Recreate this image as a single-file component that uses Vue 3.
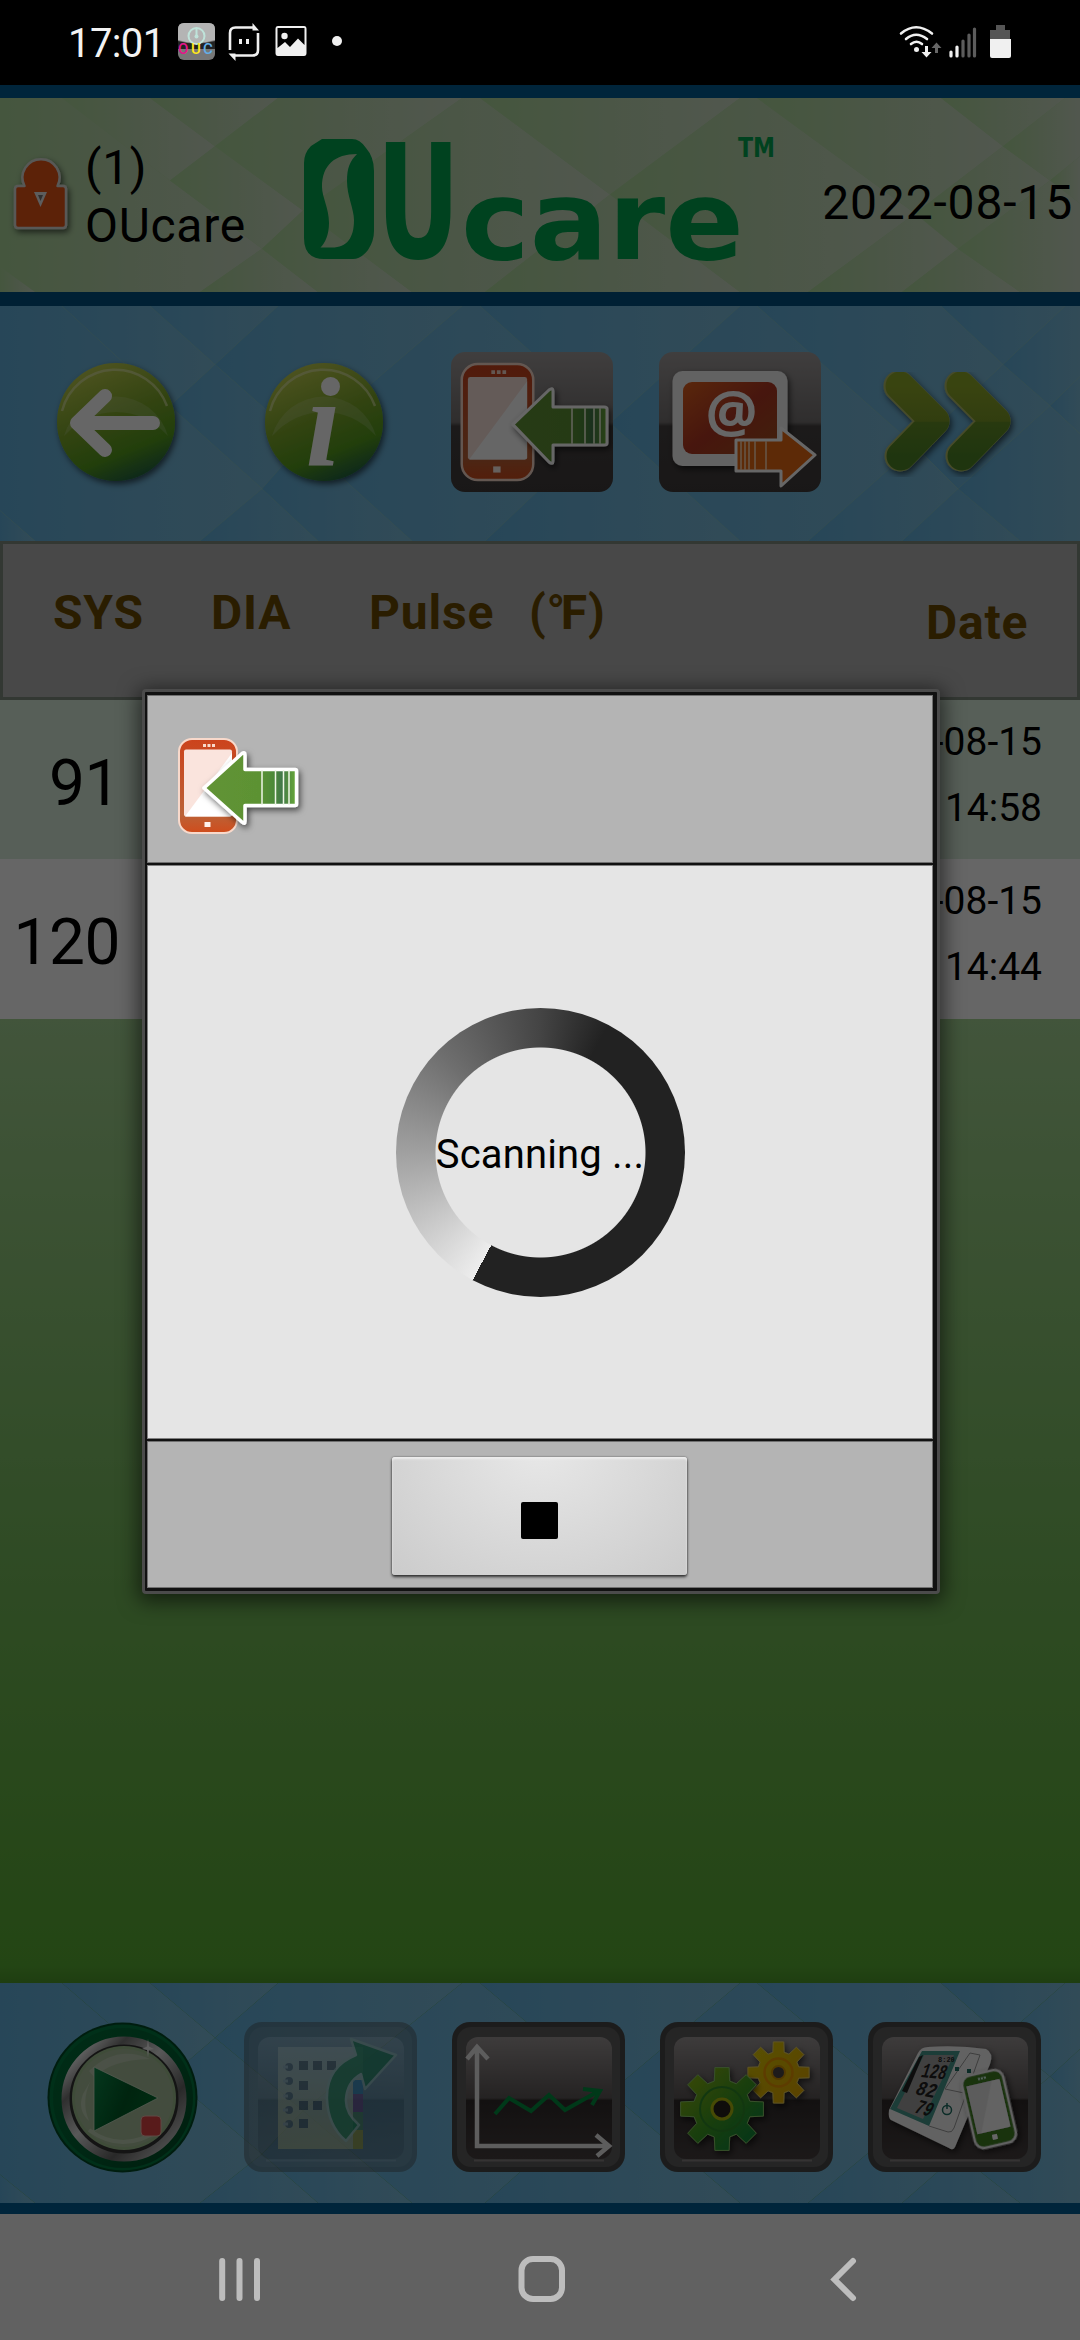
<script setup>
const shards = [
  '0,0 62,0 170,82 262,150 200,193 35,193 0,168',
  '62,0 150,0 215,48 170,82',
  '150,0 278,0 215,48',
  '170,82 215,48 303,112 262,150',
  '278,0 462,0 303,112 215,48',
  '200,193 262,150 318,193',
  '262,150 303,112 412,193 318,193',
  '462,0 480,0 610,96 485,193 412,193 303,112',
  '480,0 740,0 610,96',
  '485,193 610,96 740,193',
  '740,0 757,0 915,115 808,193 740,193 610,96',
  '757,0 941,0 1003,48 915,115',
  '941,0 1065,0 1003,48',
  '1003,48 1050,82 958,150 915,115',
  '1065,0 1080,0 1080,58 1050,82 1003,48',
  '1050,82 1080,58 1080,105',
  '808,193 915,115 958,150 902,193',
  '902,193 958,150 1020,193',
  '1050,82 1080,105 1080,193 1020,193 958,150',
  '0,168 35,193 0,193',
]

const records = [
  { sys: '91', date: '2022-08-15', time: '14:58' },
  { sys: '120', date: '2022-08-15', time: '14:44' },
]

// Eight-tooth cog outline around a centre point.
function gear(cx, cy, outer, inner) {
  const pts = []
  for (let i = 0; i < 8; i++) {
    const a = (i * Math.PI) / 4
    const spec = [[-0.27, inner], [-0.17, outer], [0.17, outer], [0.27, inner]]
    for (const [d, r] of spec) {
      pts.push(`${(cx + r * Math.sin(a + d)).toFixed(1)} ${(cy - r * Math.cos(a + d)).toFixed(1)}`)
    }
  }
  return `M${pts.join('L')}Z`
}
const bigGear = gear(62, 87, 42, 29)
const smallGear = gear(118.5, 50.5, 31, 21)
</script>

<template>
  <div class="screen">
    <svg class="defs" width="0" height="0" aria-hidden="true">
      <defs>
        <linearGradient id="shard-green"><stop offset="0" stop-color="#acd69b" /><stop offset="1" stop-color="#cbdac4" /></linearGradient>
        <linearGradient id="shard-blue"><stop offset="0" stop-color="#62b0dc" /><stop offset="1" stop-color="#7dbcda" /></linearGradient>
        <linearGradient id="orb" x1=".3" y1="0" x2=".7" y2="1"><stop offset="0" stop-color="#c3d050" /><stop offset=".45" stop-color="#7fa92c" /><stop offset=".75" stop-color="#559c1e" /><stop offset="1" stop-color="#1d5f46" /></linearGradient>
        <linearGradient id="gloss" x2="0" y2="1"><stop offset="0" stop-color="#fff" stop-opacity=".14" /><stop offset="1" stop-color="#fff" stop-opacity=".16" /></linearGradient>
        <linearGradient id="tile" x2="0" y2="1"><stop offset="0" stop-color="#a09c9c" /><stop offset=".5" stop-color="#767272" /><stop offset=".53" stop-color="#464242" /><stop offset="1" stop-color="#403b3b" /></linearGradient>
        <linearGradient id="panel" x2="0" y2="1"><stop offset="0" stop-color="#9a9595" /><stop offset=".5" stop-color="#5c5656" /><stop offset=".52" stop-color="#302b2b" /><stop offset="1" stop-color="#463f3f" /></linearGradient>
        <linearGradient id="leaf" x2="0" y2="1"><stop offset="0" stop-color="#90aa2c" /><stop offset=".5" stop-color="#7c9a28" /><stop offset=".52" stop-color="#658f26" /><stop offset="1" stop-color="#4f8626" /></linearGradient>
        <linearGradient id="shaft"><stop offset="0" stop-color="#629335" /><stop offset=".6" stop-color="#5c9233" /><stop offset=".75" stop-color="#4d8a38" /><stop offset=".84" stop-color="#42784a" /><stop offset="1" stop-color="#6aab36" /></linearGradient>
        <linearGradient id="case" x2="0" y2="1"><stop offset="0" stop-color="#cc431c" /><stop offset=".8" stop-color="#bb6237" /><stop offset="1" stop-color="#d04c1c" /></linearGradient>
        <linearGradient id="mail" x2="1" y2="1"><stop offset="0" stop-color="#e0611f" /><stop offset=".5" stop-color="#b13723" /><stop offset="1" stop-color="#a4521f" /></linearGradient>
        <linearGradient id="silver" x2="1" y2="1"><stop offset="0" stop-color="#777" /><stop offset=".12" stop-color="#eee" /><stop offset=".25" stop-color="#777" /><stop offset=".45" stop-color="#ddd" /><stop offset=".7" stop-color="#666" /><stop offset="1" stop-color="#eee" /></linearGradient>
        <linearGradient id="cog-green" x2="1" y2="1"><stop offset="0" stop-color="#9cba10" /><stop offset=".5" stop-color="#3f9c22" /><stop offset="1" stop-color="#008243" /></linearGradient>
        <linearGradient id="cog-gold" x2="1" y2="1"><stop offset="0" stop-color="#dccb08" /><stop offset="1" stop-color="#e3a300" /></linearGradient>
        <linearGradient id="play" x2="1" y2=".4"><stop offset="0" stop-color="#0c8a4a" /><stop offset=".6" stop-color="#005a26" /><stop offset="1" stop-color="#006a2c" /></linearGradient>
        <linearGradient id="rim" x2="1" y2="1"><stop offset="0" stop-color="#007038" /><stop offset=".5" stop-color="#006434" /><stop offset="1" stop-color="#004a24" /></linearGradient>
        <linearGradient id="page" x2="0" y2="1"><stop offset="0" stop-color="#b7d6dc" /><stop offset="1" stop-color="#c8d3a4" /></linearGradient>
        <filter id="drop" x="-20%" y="-20%" width="150%" height="150%"><feDropShadow dx="2" dy="3" stdDeviation="3" flood-opacity=".6" /></filter>
        <symbol id="phone" viewBox="0 0 60 96" overflow="visible">
          <rect x="1" y="1" width="58" height="94" rx="13" fill="url(#case)" stroke="#f8d9cb" stroke-width="2" />
          <rect x="6" y="11.500" width="48" height="67" rx="2" fill="#fae4dd" />
          <path d="M54 15V76.500Q54 78.500 52 78.500H7Z" fill="#fff" />
          <path d="M25 7.500h3m1.500 0h3m1.500 0h3" stroke="#f8d9cb" stroke-width="3" />
          <rect x="26.500" y="84" width="6" height="5" fill="#fff2ec" />
        </symbol>
        <symbol id="tile-frame" viewBox="0 0 173 150">
          <rect width="173" height="150" rx="18" fill="#474747" />
          <rect x="5" y="5" width="163" height="140" rx="14" fill="#5c5c5c" />
          <rect x="14" y="15" width="146" height="122" rx="12" fill="url(#panel)" />
          <path d="M22 138.500H152" stroke="#858080" stroke-width="2" />
        </symbol>
      </defs>
    </svg>

    <div class="status">
      <span class="clock">17:01</span>
      <svg class="status-left" viewBox="0 0 180 85">
        <rect x="5" y="23" width="37" height="37" rx="6" fill="#777" />
        <path d="M5 40V29Q5 23 11 23H36Q42 23 42 29V40Q23 46 5 40Z" fill="#b4b4b4" />
        <path d="M5 41Q23 46 42 41V49H5Z" fill="#222" />
        <circle cx="23.500" cy="36" r="8" fill="none" stroke="#bfe3da" stroke-width="2" /><path d="M23.500 29v8" stroke="#bfe3da" stroke-width="2" /><circle cx="23.500" cy="36.500" r="2" fill="#bfe3da" />
        <g class="mini"><text x="5" y="54" fill="#e5158b">O</text><text x="18" y="54" fill="#ffe81a">U</text><text x="30" y="54" fill="#63aee8">C</text></g>
        <g fill="none" stroke="#f0f0f0" stroke-width="2.600"><path d="M57 50V33Q57 27.500 62.500 27.500H82" /><path d="M85 33V50Q85 55.500 79.500 55.500H61" /></g>
        <path d="M79.500 23 86 30.500H79.500ZM55.500 53.500H62.500V61ZM66 39h3v5h-3zM73 39h3v5h-3z" fill="#f0f0f0" />
        <path d="M105 26H131Q133.500 26 133.500 29V53Q133.500 56 131 56H105Q102.500 56 102.500 53V29Q102.500 26 105 26ZM104.500 28V48L112 42 117 47 125 38.500 131.500 45V28Z" fill="#f0f0f0" fill-rule="evenodd" />
        <circle cx="111.500" cy="36" r="3.200" fill="#f0f0f0" />
        <circle cx="164" cy="41" r="5" fill="#f0f0f0" />
      </svg>
      <svg class="status-right" viewBox="0 0 120 85">
        <g fill="none" stroke="#f0f0f0" stroke-width="2.600" stroke-linecap="round"><path d="M2 33.500Q17 21 33 33.500M7 39Q17 30.500 28 39M12 44Q17.500 39.500 23 44" /></g>
        <circle cx="17.500" cy="49.500" r="2.500" fill="#f0f0f0" />
        <path d="M26 46h3v6h3.500l-5 5.500-5-5.500H26z" fill="#f0f0f0" />
        <path d="M36 53h3v-5h3.500l-5-5.500-5 5.500H36z" fill="#666" />
        <g stroke-width="3.200" stroke-linecap="round"><path d="M52 52v4M58 47v9" stroke="#f0f0f0" /><path d="M64 41v15M70 35v21M75.500 29v27" stroke="#5c5c5c" /></g>
        <path d="M97 25h9v5h5v10H91V30h6z" fill="#555" /><path d="M91 39h21v17q0 2-2 2H93q-2 0-2-2z" fill="#f0f0f0" />
      </svg>
    </div>

    <div class="app">
      <header class="header">
        <svg class="pattern" viewBox="0 0 1080 193" preserveAspectRatio="none"><polygon v-for="(p, i) in shards" :key="i" :points="p" fill="url(#shard-green)" /></svg>
        <svg class="lock" viewBox="0 0 66 86">
          <g filter="url(#drop)" stroke="#dcdcd6" stroke-width="2.500" fill="#e65519" stroke-linejoin="round"><path d="M12.500 34A18.500 18.500 0 1 1 45.500 34H51Q54 34 54 37V73Q54 76 51 76H6Q3 76 3 73V37Q3 34 6 34Z" /></g>
          <path d="M22 40H35L28.500 55Z" fill="#e8e8e8" /><path d="M26 43h5l-2.500 6z" fill="#777" />
        </svg>
        <div class="user"><span>(1)</span><span>OUcare</span></div>
        <svg class="logo" viewBox="0 0 480 130" aria-label="OUcare">
          <path fill-rule="evenodd" d="M18 4H48Q56 4 62 13Q70 22 70 36V96Q70 106 64 115Q57 124 49 124H20Q0 124 0 103V28Q0 18 7 11ZM53 19C31 19 18 30 18 52C18 62 25 73 25 88C25 100 21 108 16.500 112.500H28C43 112.500 50 103 50 85C50 74 43 61 43 46C43 33 46 26 53 19Z" />
          <text class="logo-u" transform="translate(72.500 123) scale(.65 1)">U</text>
          <text class="logo-care" x="157" y="123.500" textLength="283" lengthAdjust="spacingAndGlyphs">care</text>
          <text class="logo-tm" x="434" y="22" textLength="37" lengthAdjust="spacingAndGlyphs">TM</text>
        </svg>
        <span class="today">2022-08-15</span>
      </header>

      <nav class="tools">
        <svg class="pattern" viewBox="0 0 1080 193" preserveAspectRatio="none"><polygon v-for="(p, i) in shards" :key="i" :points="p" fill="url(#shard-blue)" /></svg>
        <button class="tool"><svg width="120" height="120" viewBox="0 0 120 120" overflow="visible">
          <circle cx="60" cy="60" r="59" fill="url(#orb)" filter="url(#drop)" /><path d="M8 74A54 54 0 0 1 112 74Q90 50 60 50T8 74Z" fill="url(#gloss)" /><path d="M6 49A55 55 0 0 1 111 44" fill="none" stroke="#e4ebb4" stroke-width="2.500" opacity=".6" />
          <path d="M49 34 21 61 49 88M21 61H97" fill="none" stroke="#fff" stroke-width="14" stroke-linecap="round" stroke-linejoin="round" />
        </svg></button>
        <button class="tool"><svg width="120" height="120" viewBox="0 0 120 120" overflow="visible">
          <circle cx="60" cy="60" r="59" fill="url(#orb)" filter="url(#drop)" /><path d="M8 74A54 54 0 0 1 112 74Q90 50 60 50T8 74Z" fill="url(#gloss)" /><path d="M6 49A55 55 0 0 1 111 44" fill="none" stroke="#e4ebb4" stroke-width="2.500" opacity=".6" />
          <text class="info-i" x="59" y="103" text-anchor="middle">i</text>
        </svg></button>
        <button class="tool"><svg width="162" height="140" viewBox="0 0 162 140">
          <rect width="162" height="140" rx="14" fill="url(#tile)" /><use href="#phone" x="9.500" y="10" width="74" height="120" />
          <path d="M62 72.500 98 38Q102 35 102 39V55H153Q156 55 156 57V91Q156 93 153 93H102V109Q102 113 98 110Z" fill="url(#shaft)" stroke="#fff" stroke-width="3" stroke-linejoin="round" filter="url(#drop)" />
          <path d="M121 56v36M134 56v36M143 56v36M149 56v36" stroke="#dfeacb" stroke-width="1.800" />
        </svg></button>
        <button class="tool"><svg width="162" height="140" viewBox="0 0 162 140">
          <rect width="162" height="140" rx="14" fill="url(#tile)" />
          <rect x="13.500" y="19" width="115" height="95" rx="10" fill="#f4f4f4" filter="url(#drop)" /><rect x="24" y="30" width="94" height="72" rx="9" fill="url(#mail)" />
          <text class="at" x="72.500" y="80" text-anchor="middle">@</text>
          <path d="M77 88H122V76L156 103 122 134V119H77Z" fill="#e86a12" stroke="#fff" stroke-width="3" stroke-linejoin="round" /><path d="M82 89v29M86 89v29M90 89v29M96 89v29M107 89v29" stroke="#ffd9b8" stroke-width="1.500" />
        </svg></button>
        <button class="tool"><svg width="132" height="108" viewBox="-1 0 132 108" overflow="visible">
          <g filter="url(#drop)"><g class="chev"><path d="M16 18 51 53 17 88M77 18 112 53 78 88" stroke="#b1bb68" stroke-width="31" /></g><path class="chev" d="M17 18 52 53 18 88M78 18 113 53 79 88" stroke="url(#leaf)" stroke-width="29" /></g>
        </svg></button>
      </nav>

      <main class="list">
        <div class="columns"><span>SYS</span><span>DIA</span><span>Pulse</span><span>(<i>°</i>F)</span><span class="col-date">Date</span></div>
        <div v-for="(r, i) in records" :key="i" class="record">
          <span class="sys">{{ r.sys }}</span>
          <span class="stamp"><span>{{ r.date }}</span><span>{{ r.time }}</span></span>
        </div>
      </main>

      <footer class="dock">
        <svg class="pattern" viewBox="0 0 1080 193" preserveAspectRatio="none"><polygon v-for="(p, i) in shards" :key="i" :points="p" fill="url(#shard-blue)" /></svg>
        <button class="slot"><svg width="151" height="151" viewBox="0 0 151 151">
          <circle cx="75.500" cy="75.500" r="75" fill="#004a26" /><circle cx="75.500" cy="75.500" r="73" fill="#007840" /><circle cx="76" cy="76" r="70" fill="url(#rim)" />
          <circle cx="77" cy="77" r="58.500" fill="#333" stroke="url(#silver)" stroke-width="8" /><circle cx="77" cy="76" r="52" fill="#9fbf90" /><circle cx="77" cy="76" r="49" fill="#a9bf9c" />
          <path d="M42 49Q70 22 103 37Q62 38 48 56Z" fill="#c8d2bf" opacity=".6" /><path d="M36 72Q30 88 42 99Q34 80 43 60Z" fill="#fff" opacity=".25" /><path d="M42 108Q75 132 112 108" fill="none" stroke="#e8f2e2" stroke-width="4" opacity=".35" />
          <path d="M47 45 111 76 47 109Z" fill="url(#play)" stroke="#cfe0c8" stroke-width=".8" /><rect x="94" y="94" width="20" height="20" rx="4" fill="#dc4444" stroke="#edb3a8" />
          <path d="M101 17l1 7.500 5 2.500-5 1-1 7-1-7-5-1 5-2.500z" fill="#eee" />
        </svg></button>
        <button class="slot"><svg width="173" height="150" viewBox="0 0 173 150">
          <use href="#tile-frame" width="173" height="150" opacity=".42" />
          <g opacity=".56"><rect x="34" y="25" width="85" height="102" fill="url(#page)" /><rect x="109" y="58" width="10" height="14" fill="#2590d0" /><rect x="109" y="72" width="10" height="18" fill="#7a479e" /><rect x="109" y="90" width="10" height="18" fill="#4b9b68" /><rect x="109" y="108" width="10" height="19" fill="#b8b931" />
            <path d="M55 39h9v9h-9zM69 39h9v9h-9zM83 39h9v9h-9zM55 59h9v9h-9zM55 79h9v9h-9zM69 79h9v9h-9zM55 97h9v9h-9z" fill="#4f6878" />
            <g fill="#59768a"><circle cx="45" cy="45" r="4" /><circle cx="45" cy="59" r="4" /><circle cx="45" cy="74" r="4" /><circle cx="45" cy="88" r="4" /><circle cx="45" cy="102" r="4" /></g>
            <path d="M39 45h5M39 59h5M39 74h5M39 88h5M39 102h5" stroke="#a9c4d0" stroke-width="3" /></g>
          <path opacity=".75" d="M152 33 107 17 112 33Q82 45 83 77Q84 104 102 119L115 103Q101 91 102 77Q103 60 117 52L121 67Z" fill="#1f8c66" stroke="#94c2c4" stroke-width="2.500" stroke-linejoin="round" />
        </svg></button>
        <button class="slot"><svg width="173" height="150" viewBox="0 0 173 150">
          <use href="#tile-frame" width="173" height="150" />
          <path d="M25 26V124H157M15 37 25 25 36 37M144 113 157 124 145 134" fill="none" stroke="#e8e8e8" stroke-width="4.500" />
          <path d="M43 92 57 76 79 89 97 73 113 88 145 70M131 67 148 69 140 83" fill="none" stroke="#008f40" stroke-width="4" />
        </svg></button>
        <button class="slot"><svg width="173" height="150" viewBox="0 0 173 150">
          <use href="#tile-frame" width="173" height="150" />
          <g filter="url(#drop)"><path :d="smallGear" fill="url(#cog-gold)" stroke="#e9cf5a" stroke-linejoin="round" /><circle cx="118.500" cy="50.500" r="14" fill="none" stroke="#e89600" stroke-width="2.500" /><circle cx="118.500" cy="50.500" r="6.500" fill="#4a4444" stroke="#cc9000" stroke-width="2" /></g>
          <g filter="url(#drop)"><path :d="bigGear" fill="url(#cog-green)" stroke="#8ac76a" stroke-linejoin="round" /><circle cx="62" cy="87" r="22" fill="none" stroke="#2f8a2a" stroke-width="2" /><circle cx="62" cy="87" r="10" fill="#28221e" stroke="#b0b80c" stroke-width="3" /></g>
        </svg></button>
        <button class="slot"><svg width="173" height="150" viewBox="0 0 173 150">
          <use href="#tile-frame" width="173" height="150" />
          <g filter="url(#drop)"><path d="M60 25Q90 23 118 27Q126 31 122 42L87 125Q85 129 81 126L23 98Q20 96 21 88L50 31Q53 25 60 25Z" fill="#f6f6f6" /></g>
          <path d="M54 29H92L61 104 22 87Z" fill="#47988c" /><path d="M56 33H86L55 97 29 86Z" fill="#a0a0a0" /><path d="M51 35 55 33 39 71 34 69Z" fill="#222" />
          <path d="M102 31 77 67M61 104 80 110Q84 111 86 106L112 33 102 31M77 67 96 71" fill="none" stroke="#999" /><path d="M87 45h4v4h-4zM99 47h4v4h-4z" fill="#1c6e62" />
          <circle cx="79" cy="88" r="4.500" fill="none" stroke="#1c6e62" stroke-width="1.500" /><path d="M79 81v6" stroke="#1c6e62" stroke-width="1.500" />
          <g class="lcd"><text transform="translate(52 55) rotate(5) skewX(-14)" textLength="25" lengthAdjust="spacingAndGlyphs">128</text><text transform="translate(46 72) rotate(12) skewX(-14)" textLength="20" lengthAdjust="spacingAndGlyphs">82</text><text transform="translate(45 90) rotate(16) skewX(-14)" textLength="17" lengthAdjust="spacingAndGlyphs">79</text></g>
          <text class="lcd-time" transform="translate(70 40)">8:20</text>
          <g transform="rotate(-13 121 87)" filter="url(#drop)"><rect x="100" y="50" width="42" height="74" rx="9" fill="#3f7f22" stroke="#f2f2f2" stroke-width="2.500" /><rect x="104" y="60" width="34" height="49" rx="1" fill="#f8f8f8" /><path d="M104 60h26l-22 49h-4z" fill="#e6e6e6" /><path d="M117 55.500h8" stroke="#dfe" stroke-width="2" stroke-dasharray="2 1" /><rect x="118" y="113" width="5" height="5" fill="#fff" /></g>
        </svg></button>
      </footer>
      <div class="scrim"></div>
    </div>

    <div class="system-nav">
      <svg viewBox="0 0 1080 126">
        <g fill="none" stroke="#bdbdbd" stroke-width="6" stroke-linecap="round"><path d="M222.200 47V84M239.500 47V84M257 47V84" /><rect x="521.500" y="45" width="40.500" height="40" rx="11.500" /><path d="M853 47 834.500 65.500 853 84" /></g>
      </svg>
    </div>

    <section class="dialog" role="dialog">
      <div class="dialog-head">
        <svg width="124" height="100" viewBox="0 0 124 100" overflow="visible">
          <use href="#phone" width="60" height="96" />
          <path d="M26 50 64 15.500Q67 13.500 67 17V31.500H117Q118.500 31.500 118.500 33V66Q118.500 67.500 117 67.500H67V83Q67 87 64 84Z" fill="url(#shaft)" stroke="#fff" stroke-width="3.500" stroke-linejoin="round" filter="url(#drop)" />
          <path d="M84 32v35M97.500 32v35M105.500 32v35M111 32v35" stroke="#eef5e6" stroke-width="1.500" />
        </svg>
      </div>
      <div class="dialog-body"><div class="spinner"><span>Scanning ...</span></div></div>
      <div class="dialog-foot"><button class="stop" aria-label="Stop"><span class="square"></span></button></div>
    </section>
  </div>
</template>

<style>
body { margin: 0; background: #000; }
</style>

<style scoped>
* { box-sizing: border-box; }
.screen { position: relative; display: flex; flex-direction: column; width: 1080px; height: 2340px; overflow: hidden; font-family: Roboto, "Noto Sans", sans-serif; color: #000; }
.defs { position: absolute; }
svg { display: block; flex: none; }
button { border: 0; padding: 0; background: none; }

.status { display: flex; justify-content: space-between; height: 85px; padding-left: 68px; padding-right: 61px; background: #000; color: #f2f2f2; }
.clock { width: 105px; font-size: 40px; line-height: 46px; padding-top: 21px; letter-spacing: -.6px; }
.status-left { width: 180px; height: 85px; margin-right: auto; }
.status-right { width: 120px; height: 85px; }
.mini { font: 500 15px Roboto, sans-serif; }

.app { position: relative; display: flex; flex-direction: column; height: 2129px; background: linear-gradient(#b0d8a0 0, #a5d494 934px, #74ba59 1500px, #59ad33 1880px, #4d9b2a 1898px); }
.scrim { position: absolute; inset: 0; background: rgba(0, 0, 0, .6); }
.pattern { position: absolute; inset: 0; width: 100%; height: 100%; }
.header > :not(.pattern), .tool, .slot { position: relative; }

.header { position: relative; display: flex; height: 221px; padding: 0 7px 0 12px; border-top: 13px solid #005c93; border-bottom: 14px solid #005082; }
.lock { width: 66px; height: 86px; margin-top: 54px; overflow: visible; }
.user { display: flex; flex-direction: column; width: 226px; margin-top: 41px; padding-left: 7px; font-size: 48px; line-height: 57.500px; letter-spacing: .7px; }
.logo { width: 480px; height: 130px; margin-top: 37px; fill: #00a54e; overflow: visible; }
.logo-u, .logo-care, .logo-tm { font-family: "DejaVu Sans", sans-serif; font-weight: bold; }
.logo-u { font-size: 158px; }
.logo-care { font-size: 111px; }
.logo-tm { font-size: 27px; }
.today { margin-left: -40px; flex: 1; text-align: right; margin-top: 77px; font-size: 48px; line-height: 56px; letter-spacing: .85px; white-space: nowrap; }

.tools { position: relative; display: grid; grid-template-columns: repeat(5, 208px); align-items: center; height: 235px; padding: 0 0 4px 12px; }
.tool { display: flex; justify-content: center; }
.info-i { font: italic bold 126px "Liberation Serif", serif; fill: #fff; }
.at { font: bold 58px "Open Sans", sans-serif; fill: #fff; }
.chev { fill: none; stroke-linecap: round; stroke-linejoin: round; }

.list { flex: 1; }
.columns { display: grid; grid-template-columns: 158px 158px 160px 397px auto; height: 159px; padding: 41px 0 0 50px; border: 3px solid #808c80; background: #b4b4b4; color: #6a4a00; font-size: 48px; font-weight: bold; line-height: 56px; letter-spacing: .8px; }
.columns i { font-style: normal; letter-spacing: -4.500px; }
.col-date { padding-top: 10px; }
.record { display: flex; justify-content: space-between; height: 159px; padding-right: 38px; background: #d9eedc; }
.record + .record { height: 160px; background: #fff; }
.sys { width: 120px; padding-top: 46px; font-size: 64px; line-height: 76px; letter-spacing: -.5px; text-align: right; }
.stamp { display: flex; flex-direction: column; padding-top: 9px; font-size: 39px; line-height: 66px; text-align: right; }

.dock { position: relative; display: grid; grid-template-columns: repeat(5, 208px); align-items: center; height: 231px; padding: 8px 0 0 18px; border-bottom: 11px solid #005c93; }
.slot { display: flex; justify-content: center; }
.lcd { font: bold 21px "Liberation Mono", monospace; fill: #222; }
.lcd-time { font: bold 7px "Liberation Mono", monospace; fill: #222; }

.system-nav { height: 126px; background: #616161; }

.dialog { position: absolute; left: 142px; top: 689px; display: flex; flex-direction: column; width: 798px; height: 905px; border: 3px solid #4b4b4b; border-radius: 4px; background: #111; box-shadow: 0 4px 20px 4px rgba(0, 0, 0, .55); padding: 4px 5px 4px 3px; }
.dialog-head { height: 166px; padding: 42px 30px; background: #b4b4b4; box-shadow: 0 0 0 1px #707070; }
.dialog-body { display: flex; justify-content: center; align-items: center; height: 573px; margin: 4px 0; background: #e5e5e5; box-shadow: 0 0 0 1px #808080; }
.dialog-foot { display: flex; justify-content: center; height: 145px; padding-top: 15px; background: #b4b4b4; box-shadow: 0 0 0 1px #707070; }
.spinner { display: flex; justify-content: center; align-items: center; width: 289px; height: 289px; padding-top: 4px; border-radius: 50%; background: radial-gradient(circle, #e5e5e5 104.500px, transparent 105.500px), conic-gradient(from 208deg, #ededed, #a0a0a0 62deg, #6e6e6e 107deg, #444 152deg, #222 180deg, #222); font-size: 40px; letter-spacing: .15px; white-space: nowrap; }
.stop { display: flex; justify-content: center; align-items: center; width: 295px; height: 118px; padding-top: 8px; margin-right: 2px; border-radius: 3px; background: radial-gradient(ellipse at 50% -10%, #e8e8e8, #d8d8d8 55%, #cbcbcb); box-shadow: 0 2px 3px rgba(0, 0, 0, .7), 0 0 2px rgba(0, 0, 0, .5), inset 0 2px 2px #eee; }
.square { width: 37px; height: 37px; border-radius: 2px; background: #000; }
</style>
